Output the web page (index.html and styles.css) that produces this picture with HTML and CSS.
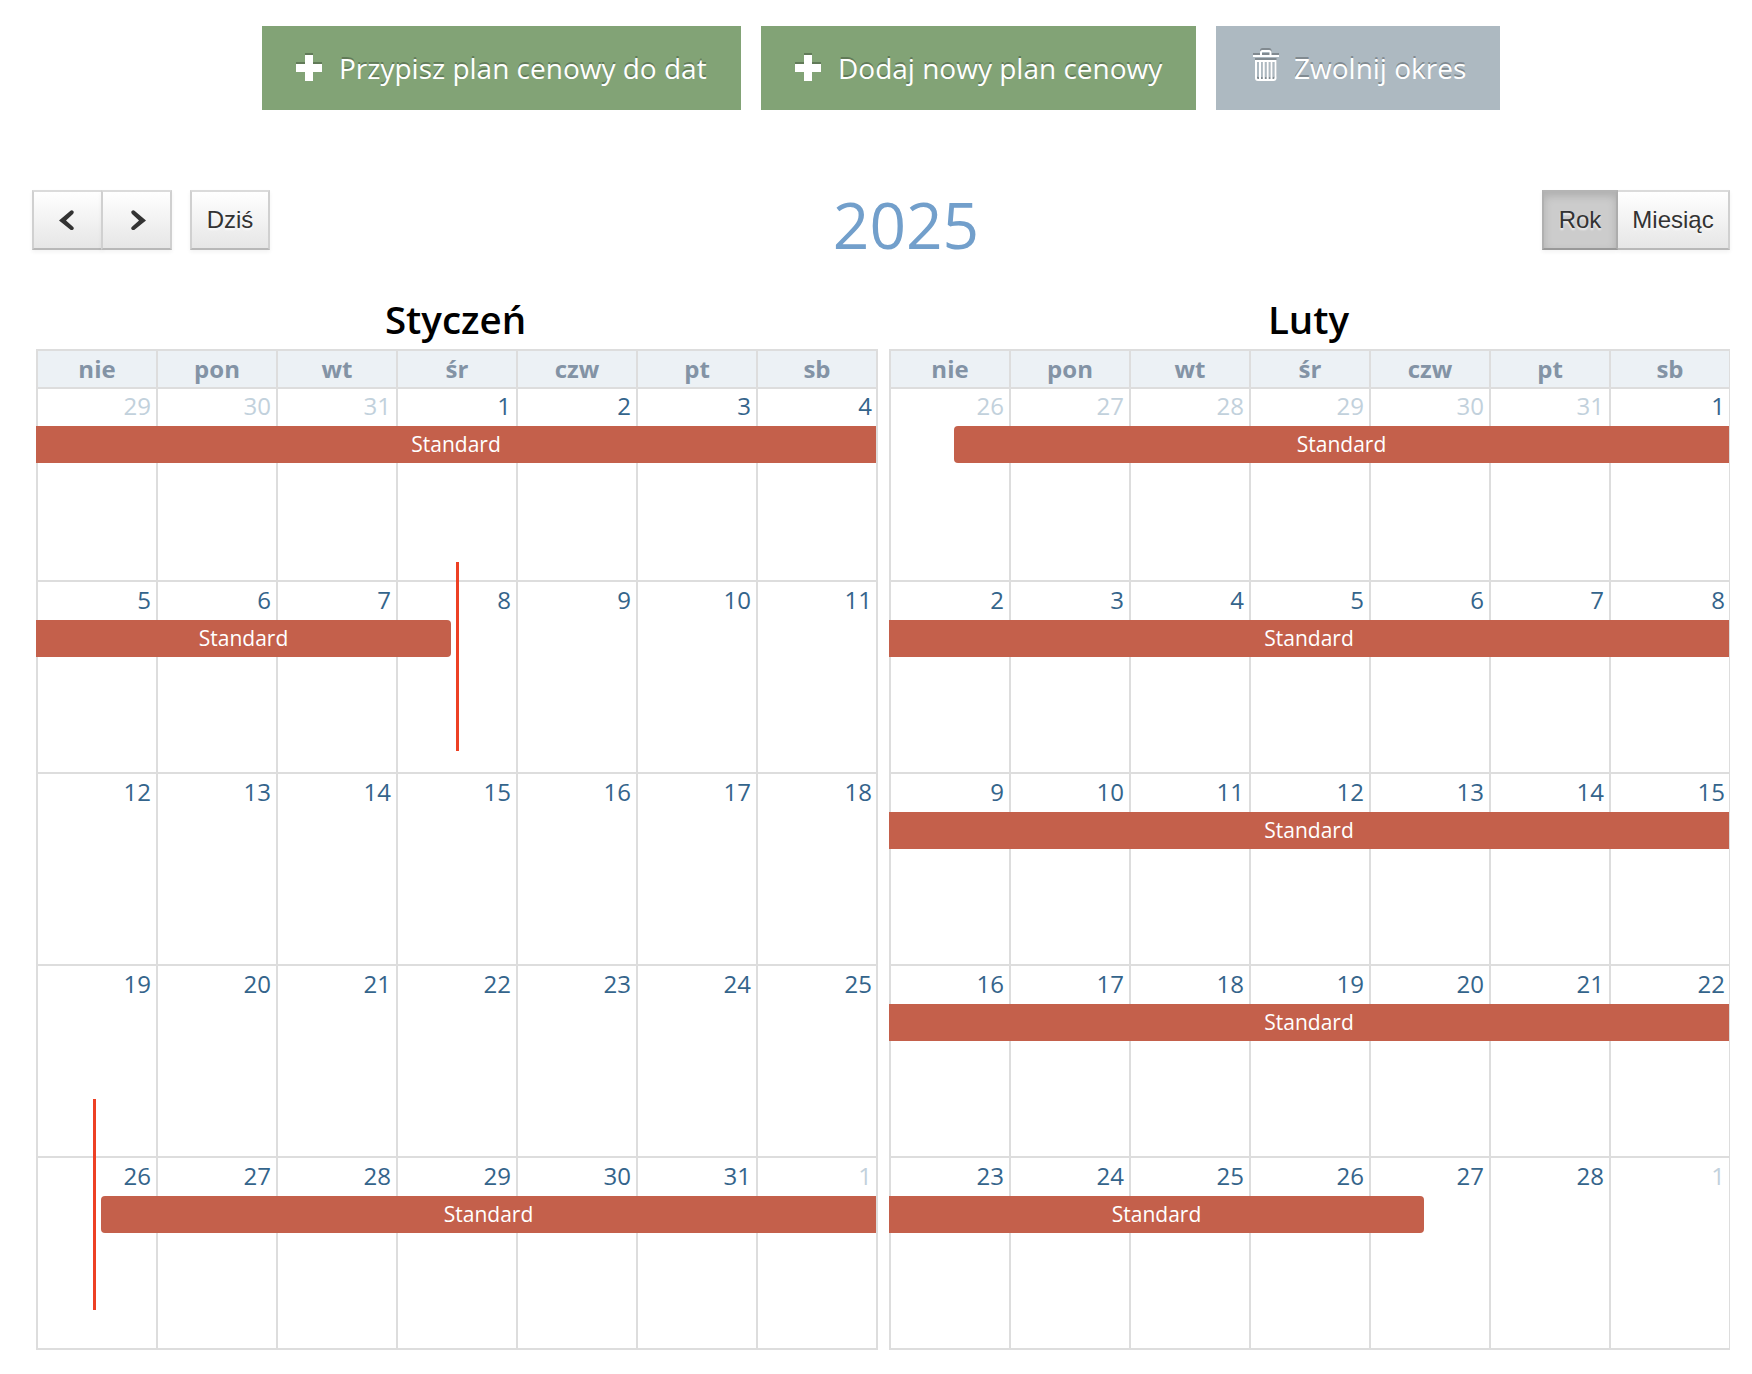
FILE: index.html
```html
<!DOCTYPE html>
<html lang="pl">
<head>
    <meta charset="UTF-8">
    <meta name="viewport" content="width=device-width, initial-scale=1.0">
    <title>Plany cenowe</title>
    <link rel="stylesheet" href="styles.css">
</head>
<body>
    <div class="actions">
        <button class="btn btn-green">
            <svg class="btn-icon" width="26" height="26" viewBox="0 0 26 26"><path d="M9 0h8v9h9v8h-9v9H9v-9H0V9h9z" fill="#fff"/></svg>
            <span>Przypisz plan cenowy do dat</span>
        </button>
        <button class="btn btn-green">
            <svg class="btn-icon" width="26" height="26" viewBox="0 0 26 26"><path d="M9 0h8v9h9v8h-9v9H9v-9H0V9h9z" fill="#fff"/></svg>
            <span>Dodaj nowy plan cenowy</span>
        </button>
        <button class="btn btn-grey">
            <svg class="btn-icon trash" width="26" height="31" viewBox="0 0 26 31" fill="none" stroke="#fff" stroke-width="2">
                <path d="M8 5V2.500Q8 1 9.500 1h6.500Q17.500 1 17.500 2.500V5"/>
                <path d="M0 6h26"/>
                <path d="M3 11h19.500V28q0 2-2 2H5q-2 0-2-2z"/>
                <path d="M7 11v18M10.800 11v18M14.700 11v18M18.500 11v18"/>
            </svg>
            <span>Zwolnij okres</span>
        </button>
    </div>

    <div class="calendar">
        <div class="toolbar">
            <div class="toolbar-side">
                <div class="group">
                    <button class="fc-btn arrow prev"><svg width="16" height="20" viewBox="0 0 16 20"><path d="M0 10.500 11.500.700q1.500-1 2.700.300t-.200 3L7 10.500l7 6.200q1.500 1.500.200 2.800t-2.700.200z" fill="#333"/></svg></button>
                    <button class="fc-btn arrow next"><svg width="16" height="20" viewBox="0 0 16 20"><path d="M16 10.500 4.500.700q-1.500-1-2.700.300t.200 3L9 10.500l-7 6.200q-1.500 1.500-.200 2.800t2.700.200z" fill="#333"/></svg></button>
                </div>
                <button class="fc-btn today">Dziś</button>
            </div>
            <h2 class="title">2025</h2>
            <div class="toolbar-side right">
                <div class="group">
                    <button class="fc-btn year active">Rok</button>
                    <button class="fc-btn month-btn">Miesiąc</button>
                </div>
            </div>
        </div>

        <div class="months">
            <div class="month">
                <h3 class="month-name">Styczeń</h3>
                <div class="grid">
                    <div class="row head">
                        <div>nie</div><div>pon</div><div>wt</div><div>śr</div><div>czw</div><div>pt</div><div>sb</div>
                    </div>
                    <div class="row week">
                        <div class="other">29</div><div class="other">30</div><div class="other">31</div><div>1</div><div>2</div><div>3</div><div>4</div>
                        <span class="event">Standard</span>
                    </div>
                    <div class="row week">
                        <div>5</div><div>6</div><div>7</div><div>8</div><div>9</div><div>10</div><div>11</div>
                        <span class="event ends-wed">Standard</span>
                        <span class="marker marker-end"></span>
                    </div>
                    <div class="row week">
                        <div>12</div><div>13</div><div>14</div><div>15</div><div>16</div><div>17</div><div>18</div>
                    </div>
                    <div class="row week">
                        <div>19</div><div>20</div><div>21</div><div>22</div><div>23</div><div>24</div><div>25</div>
                    </div>
                    <div class="row week">
                        <div>26</div><div>27</div><div>28</div><div>29</div><div>30</div><div>31</div><div class="other">1</div>
                        <span class="event starts-sun">Standard</span>
                        <span class="marker marker-start"></span>
                    </div>
                </div>
            </div>

            <div class="month">
                <h3 class="month-name">Luty</h3>
                <div class="grid">
                    <div class="row head">
                        <div>nie</div><div>pon</div><div>wt</div><div>śr</div><div>czw</div><div>pt</div><div>sb</div>
                    </div>
                    <div class="row week">
                        <div class="other">26</div><div class="other">27</div><div class="other">28</div><div class="other">29</div><div class="other">30</div><div class="other">31</div><div>1</div>
                        <span class="event starts-sun">Standard</span>
                    </div>
                    <div class="row week">
                        <div>2</div><div>3</div><div>4</div><div>5</div><div>6</div><div>7</div><div>8</div>
                        <span class="event">Standard</span>
                    </div>
                    <div class="row week">
                        <div>9</div><div>10</div><div>11</div><div>12</div><div>13</div><div>14</div><div>15</div>
                        <span class="event">Standard</span>
                    </div>
                    <div class="row week">
                        <div>16</div><div>17</div><div>18</div><div>19</div><div>20</div><div>21</div><div>22</div>
                        <span class="event">Standard</span>
                    </div>
                    <div class="row week">
                        <div>23</div><div>24</div><div>25</div><div>26</div><div>27</div><div>28</div><div class="other">1</div>
                        <span class="event ends-thu">Standard</span>
                    </div>
                </div>
            </div>
        </div>
    </div>
</body>
</html>
```

FILE: styles.css
```css
* {
    box-sizing: border-box;
}
body {
    margin: 0;
    background: #fff;
    font-family: "Open Sans", "Noto Sans", sans-serif;
}

/* action buttons */
.actions {
    display: flex;
    gap: 20px;
    padding: 26px 0 0 262px;
}
.btn {
    display: flex;
    align-items: center;
    gap: 17px;
    height: 84px;
    padding: 0 0 0 34px;
    border: 0;
    color: #fff;
    font-family: inherit;
    font-size: 28px;
    white-space: nowrap;
    text-shadow: 0 -2px 0 rgba(0, 0, 0, 0.25);
}
.btn-green {
    width: 479px;
    background: #82a376;
}
.btn-green + .btn-green {
    width: 435px;
}
.btn-grey {
    width: 284px;
    padding-left: 37px;
    gap: 15px;
    background: #adb9c1;
}
.btn-icon {
    flex: none;
    filter: drop-shadow(0 -2px 0 rgba(0, 0, 0, 0.25));
}
.btn-icon.trash {
    margin-bottom: 5px;
}

/* calendar */
.calendar {
    width: 1698px;
    margin-left: 32px;
    padding-top: 80px;
}
.toolbar {
    display: flex;
    justify-content: space-between;
    height: 60px;
}
.toolbar-side {
    display: flex;
    gap: 18px;
    width: 300px;
}
.toolbar-side.right {
    justify-content: flex-end;
}
.group {
    display: flex;
}
.fc-btn {
    display: flex;
    align-items: center;
    justify-content: center;
    height: 60px;
    padding: 0;
    border: 2px solid;
    border-color: #dbdbdb #d0d0d0 #b8b8b8;
    background: linear-gradient(#fff, #e6e6e6);
    color: #333;
    font-family: "Liberation Sans", Arial, sans-serif;
    font-size: 24px;
    text-shadow: 0 2px 2px rgba(255, 255, 255, 0.75);
    box-shadow: inset 0 2px 0 rgba(255, 255, 255, 0.2), 0 2px 4px rgba(0, 0, 0, 0.05);
}
.arrow {
    width: 71px;
}
.prev {
    padding-right: 2px;
}
.next {
    margin-left: -2px;
    padding-left: 2px;
}
.today {
    width: 80px;
}
.year {
    width: 76px;
}
.month-btn {
    width: 112px;
    border-left: 0;
}
.fc-btn.active {
    background: #ccc;
    border-color: #b4b4b4 #b0b0b0 #999;
    box-shadow: inset 0 4px 8px rgba(0, 0, 0, 0.15), 0 2px 4px rgba(0, 0, 0, 0.05);
}
.title {
    margin: 3px 0 0 50px;
    color: #729fcb;
    font-size: 64px;
    font-weight: 400;
    line-height: 64px;
}

.months {
    display: flex;
    gap: 11px;
    padding-left: 4px;
    overflow: hidden;
}
.month {
    flex: none;
    width: 842px;
    padding-bottom: 24px;
}
.month-name {
    margin: 44px 0 0;
    height: 55px;
    padding-right: 3px;
    font-size: 38.5px;
    font-weight: 600;
    line-height: 50px;
    text-align: center;
    color: #000;
}
.grid {
    border-right: 2px solid #ddd;
    border-bottom: 2px solid #ddd;
}
.row {
    display: grid;
    grid-template-columns: repeat(7, 120px);
    position: relative;
}
.row > div {
    border-top: 2px solid #ddd;
    border-left: 2px solid #ddd;
}
.head > div {
    height: 38px;
    background: #ecf1f5;
    color: #8393a5;
    font-size: 24px;
    font-weight: 700;
    line-height: 36px;
    text-align: center;
}
.week > div {
    height: 192px;
    padding: 1px 5px 0 0;
    color: #34648b;
    font-size: 24px;
    line-height: 33px;
    text-align: right;
}
.week > div:nth-child(7) {
    padding-right: 4px;
}
.head + .week > div {
    height: 193px;
    padding-top: 0;
}
.week > .other {
    color: #c2d1dc;
}

/* price plan bars lie over the day cells */
.event {
    position: absolute;
    top: 40px;
    left: 0;
    right: 0;
    height: 37px;
    background: #c4604b;
    color: #fff;
    font-size: 21px;
    line-height: 36px;
    text-align: center;
}
.head + .week .event {
    top: 39px;
}
.starts-sun {
    left: 65px;
    border-radius: 4px 0 0 4px;
}
.ends-wed {
    right: 425px;
    border-radius: 0 4px 4px 0;
}
.ends-thu {
    right: 305px;
    border-radius: 0 4px 4px 0;
}
.marker {
    position: absolute;
    width: 3px;
    background: #ed4024;
}
.marker-end {
    top: -18px;
    left: 420px;
    height: 189px;
}
.marker-start {
    top: -57px;
    left: 57px;
    height: 211px;
}
```
